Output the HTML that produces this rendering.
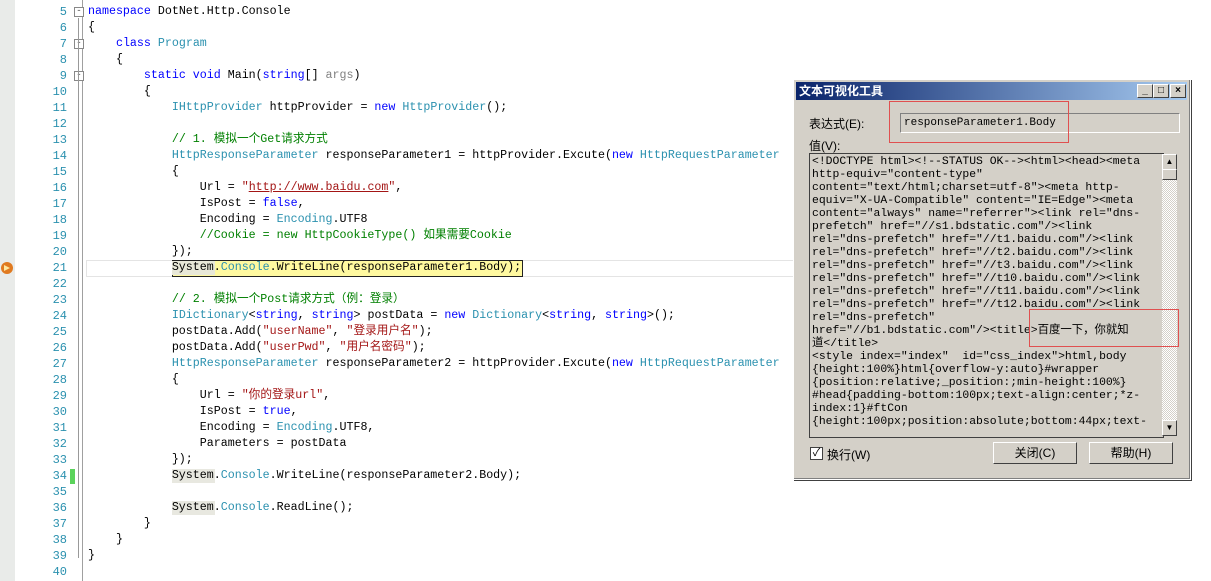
<!DOCTYPE html>
<html><head><meta charset="utf-8"><style>
body{margin:0;width:1211px;height:581px;overflow:hidden;background:#fff;position:relative;font-family:"Liberation Mono","Noto Sans CJK SC",monospace;}
.strip{position:absolute;left:0;top:0;width:15px;height:581px;background:#e9ebe9;}
.vline{position:absolute;left:82px;top:0;width:1px;height:581px;background:#a0a0a0;}
.ln{position:absolute;left:20px;width:47px;text-align:right;font-size:12px;color:#2b91af;line-height:16px;}
.c{position:absolute;left:88px;font-size:11.65px;line-height:16px;white-space:pre;color:#000;}
.k{color:#0000ff}.t{color:#2b91af}.s{color:#a31515}.g{color:#008000}.gr{color:#808080}
.u{text-decoration:underline}
.box{position:absolute;left:74px;width:8px;height:8px;border:1px solid #888;background:#fff;font-size:9px;line-height:7px;text-align:center;color:#444;}
.dlg{position:absolute;left:793px;top:79px;width:396px;height:399px;background:#d4d0c8;border:1px solid #fff;box-shadow:1px 1px 0 #404040, inset -1px -1px 0 #808080;font-family:"Liberation Sans","Noto Sans CJK SC",sans-serif;font-size:12px;}
.title{position:absolute;left:2px;top:2px;right:3px;height:18px;background:linear-gradient(90deg,#0a246a,#a6caf0);color:#fff;font-weight:bold;font-size:12px;line-height:18px;padding-left:3px;}
.tb{position:absolute;top:2px;width:14px;height:12px;background:#d4d0c8;border:1px solid;border-color:#fff #404040 #404040 #fff;color:#000;font-size:10px;line-height:12px;text-align:center;font-weight:bold}
.btn{position:absolute;width:82px;height:20px;background:#d4d0c8;border:1px solid;border-color:#fff #404040 #404040 #fff;text-align:center;line-height:20px;font-size:12px;}
.ta{position:absolute;left:15px;top:73px;width:351px;height:281px;background:#d4d0c8;border:1px solid #404040;font-family:"Liberation Mono","Noto Sans CJK SC",monospace;font-size:11.4px;line-height:13px;white-space:pre;color:#000;padding:2px 0 0 2px;overflow:hidden;}
</style></head><body>
<div class="strip"></div>
<div class="vline"></div>
<div style="position:absolute;left:86px;top:260px;width:709px;height:15px;border:1px solid #e4e4e4"></div>
<div style="position:absolute;left:172px;top:260px;width:349px;height:15px;border:1px solid #222;background:#fff9a0"></div>
<div style="position:absolute;left:172px;top:261px;width:43px;height:14px;background:#e8e8d8"></div>
<div style="position:absolute;left:172px;top:501px;width:43px;height:14px;background:#e8e8e0"></div>
<div style="position:absolute;left:172px;top:469px;width:43px;height:14px;background:#e8e8e0"></div>
<div style="position:absolute;left:70px;top:469px;width:5px;height:15px;background:#5bd35b"></div>
<div style="position:absolute;left:1px;top:262px;width:12px;height:12px;border-radius:6px;background:#e07a20;"><div style="position:absolute;left:3px;top:3px;width:0;height:0;border-left:6px solid #ffe8a0;border-top:3px solid transparent;border-bottom:3px solid transparent"></div></div>
<div class="box" style="top:7px">-</div><div class="box" style="top:39px">-</div><div class="box" style="top:71px">-</div>
<div style="position:absolute;left:78px;top:18px;width:1px;height:540px;background:#999"></div>

<div class="ln" style="top:4px">5<br>6<br>7<br>8<br>9<br>10<br>11<br>12<br>13<br>14<br>15<br>16<br>17<br>18<br>19<br>20<br>21<br>22<br>23<br>24<br>25<br>26<br>27<br>28<br>29<br>30<br>31<br>32<br>33<br>34<br>35<br>36<br>37<br>38<br>39<br>40</div>
<div class="c" style="top:4px"><span class="k">namespace</span> DotNet.Http.Console
{
    <span class="k">class</span> <span class="t">Program</span>
    {
        <span class="k">static void</span> Main(<span class="k">string</span>[] <span class="gr">args</span>)
        {
            <span class="t">IHttpProvider</span> httpProvider = <span class="k">new</span> <span class="t">HttpProvider</span>();

            <span class="g">// 1. 模拟一个Get请求方式</span>
            <span class="t">HttpResponseParameter</span> responseParameter1 = httpProvider.Excute(<span class="k">new</span> <span class="t">HttpRequestParameter</span>
            {
                Url = <span class="s">"<span class="u">http://www.baidu.com</span>"</span>,
                IsPost = <span class="k">false</span>,
                Encoding = <span class="t">Encoding</span>.UTF8
                <span class="g">//Cookie = new HttpCookieType() 如果需要Cookie</span>
            });
            System.<span class="t">Console</span>.WriteLine(responseParameter1.Body);

            <span class="g">// 2. 模拟一个Post请求方式（例：登录）</span>
            <span class="t">IDictionary</span>&lt;<span class="k">string</span>, <span class="k">string</span>&gt; postData = <span class="k">new</span> <span class="t">Dictionary</span>&lt;<span class="k">string</span>, <span class="k">string</span>&gt;();
            postData.Add(<span class="s">"userName"</span>, <span class="s">"登录用户名"</span>);
            postData.Add(<span class="s">"userPwd"</span>, <span class="s">"用户名密码"</span>);
            <span class="t">HttpResponseParameter</span> responseParameter2 = httpProvider.Excute(<span class="k">new</span> <span class="t">HttpRequestParameter</span>
            {
                Url = <span class="s">"你的登录url"</span>,
                IsPost = <span class="k">true</span>,
                Encoding = <span class="t">Encoding</span>.UTF8,
                Parameters = postData
            });
            System.<span class="t">Console</span>.WriteLine(responseParameter2.Body);

            System.<span class="t">Console</span>.ReadLine();
        }
    }
}
</div>

<div class="dlg">
<div class="title">文本可视化工具
<div class="tb" style="right:34px">_</div><div class="tb" style="right:18px">□</div><div class="tb" style="right:1px">×</div></div>
<div style="position:absolute;left:15px;top:35px">表达式(E):</div>
<div style="position:absolute;left:106px;top:33px;width:275px;height:18px;border:1px solid;border-color:#808080 #fff #fff #808080;background:#d4d0c8;font-family:'Liberation Mono',monospace;font-size:11px;line-height:18px;padding-left:3px">responseParameter1.Body</div>
<div style="position:absolute;left:95px;top:21px;width:178px;height:40px;border:1px solid #e05050"></div>
<div style="position:absolute;left:15px;top:57px">值(V):</div>
<div class="ta">&lt;!DOCTYPE html&gt;&lt;!--STATUS OK--&gt;&lt;html&gt;&lt;head&gt;&lt;meta
http-equiv="content-type"
content="text/html;charset=utf-8"&gt;&lt;meta http-
equiv="X-UA-Compatible" content="IE=Edge"&gt;&lt;meta
content="always" name="referrer"&gt;&lt;link rel="dns-
prefetch" href="//s1.bdstatic.com"/&gt;&lt;link
rel="dns-prefetch" href="//t1.baidu.com"/&gt;&lt;link
rel="dns-prefetch" href="//t2.baidu.com"/&gt;&lt;link
rel="dns-prefetch" href="//t3.baidu.com"/&gt;&lt;link
rel="dns-prefetch" href="//t10.baidu.com"/&gt;&lt;link
rel="dns-prefetch" href="//t11.baidu.com"/&gt;&lt;link
rel="dns-prefetch" href="//t12.baidu.com"/&gt;&lt;link
rel="dns-prefetch"
href="//b1.bdstatic.com"/&gt;&lt;title&gt;百度一下，你就知
道&lt;/title&gt;
&lt;style index="index"  id="css_index"&gt;html,body
{height:100%}html{overflow-y:auto}#wrapper
{position:relative;_position:;min-height:100%}
#head{padding-bottom:100px;text-align:center;*z-
index:1}#ftCon
{height:100px;position:absolute;bottom:44px;text-</div>
<div style="position:absolute;left:368px;top:74px;width:15px;height:282px;background:repeating-conic-gradient(#fff 0 25%,#d4d0c8 0 50%) 0 0/2px 2px"></div>
<div class="btn" style="left:368px;top:74px;width:13px;height:14px;line-height:14px;font-size:8px">▲</div>
<div class="btn" style="left:368px;top:89px;width:13px;height:9px"></div>
<div class="btn" style="left:368px;top:340px;width:13px;height:14px;line-height:14px;font-size:8px">▼</div>
<div style="position:absolute;left:235px;top:229px;width:148px;height:36px;border:1px solid #e05050"></div>
<div style="position:absolute;left:16px;top:367px;width:11px;height:11px;background:#fff;border:1px solid #404040;font-size:11px;line-height:11px;text-align:center">✓</div>
<div style="position:absolute;left:33px;top:366px">换行(W)</div>
<div class="btn" style="left:199px;top:362px">关闭(C)</div>
<div class="btn" style="left:295px;top:362px">帮助(H)</div>
</div>
</body></html>
